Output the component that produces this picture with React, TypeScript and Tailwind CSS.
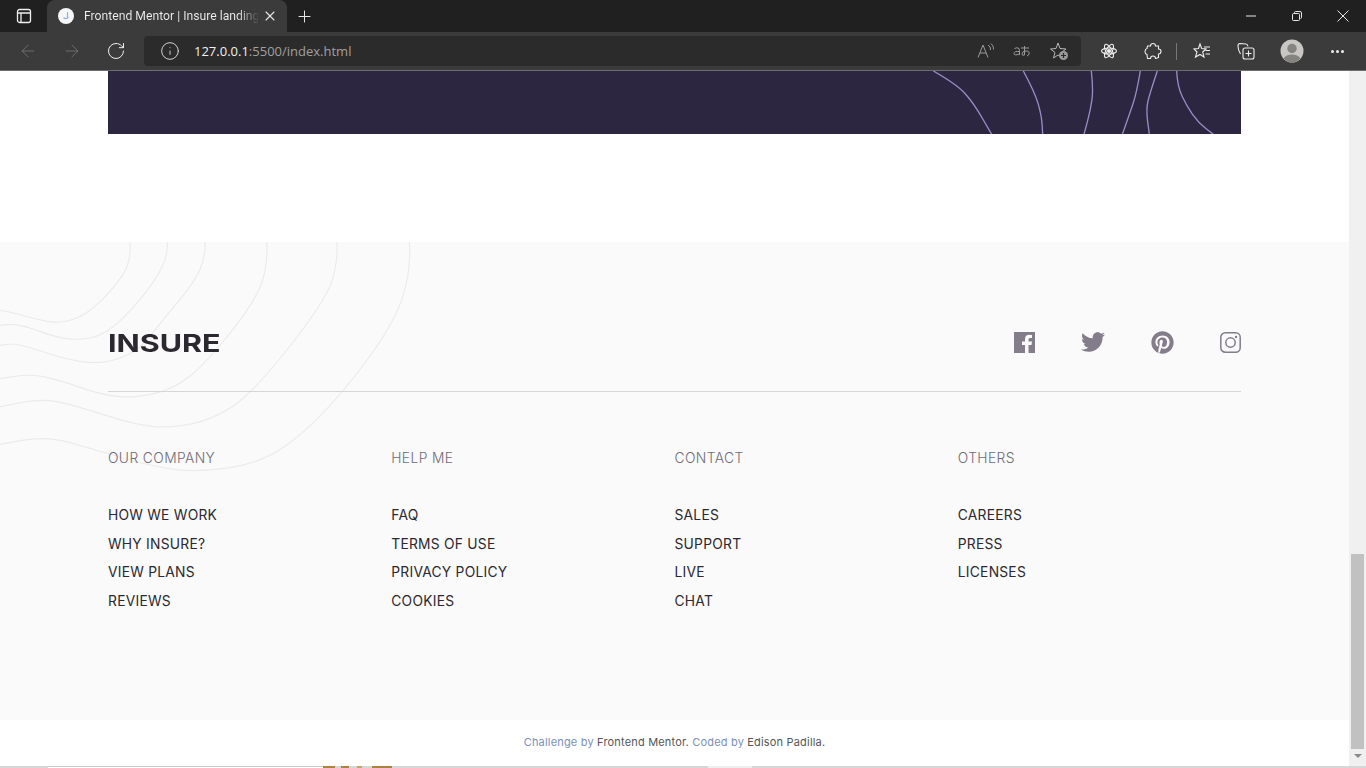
import { ArrowLeft, ArrowRight, Info, Plus, RotateCw, X } from "lucide-react";
import { FaPinterest, FaTwitter } from "react-icons/fa";

// smooth line through points, used for the contour decoration
function smooth(pts: number[][]) {
  let d = `M${pts[0][0]} ${pts[0][1]}`;
  for (let i = 1; i < pts.length - 1; i++) {
    const mx = (pts[i][0] + pts[i + 1][0]) / 2;
    const my = (pts[i][1] + pts[i + 1][1]) / 2;
    d += ` Q${pts[i][0]} ${pts[i][1]} ${mx} ${my}`;
  }
  const last = pts[pts.length - 1];
  return d + ` L${last[0]} ${last[1]}`;
}

const footerCurves = [
  [[390, 18], [393, 60], [370, 120], [300, 200], [240, 245], [175, 262], [110, 250], [40, 230], [0, 223]],
  [[502, 18], [505, 50], [470, 130], [370, 250], [300, 300], [240, 312], [170, 305], [90, 275], [40, 264], [0, 268]],
  [[615, 18], [618, 50], [590, 130], [490, 250], [420, 340], [340, 375], [280, 382], [200, 370], [90, 335], [40, 322], [0, 328]],
  [[800, 18], [804, 80], [770, 190], [620, 380], [520, 460], [400, 487], [300, 475], [170, 430], [90, 414], [0, 428]],
  [[1010, 18], [1015, 70], [980, 190], [760, 470], [640, 550], [510, 577], [400, 565], [230, 510], [130, 487], [0, 512]],
  [[1228, 18], [1234, 90], [1190, 250], [1030, 470], [880, 620], [760, 685], [600, 708], [470, 695], [280, 640], [140, 600], [0, 625]],
];

const bandCurves = [
  [[100, 15], [170, 55], [220, 110], [275, 205]],
  [[370, 15], [405, 80], [425, 150], [428, 205]],
  [[574, 15], [580, 70], [572, 130], [552, 205]],
  [[721, 15], [710, 80], [690, 140], [667, 205]],
  [[772, 15], [750, 80], [738, 130], [748, 205]],
  [[830, 15], [832, 60], [860, 120], [895, 170], [940, 205]],
];

const columns = [
  { title: "OUR COMPANY", links: ["HOW WE WORK", "WHY INSURE?", "VIEW PLANS", "REVIEWS"] },
  { title: "HELP ME", links: ["FAQ", "TERMS OF USE", "PRIVACY POLICY", "COOKIES"] },
  { title: "CONTACT", links: ["SALES", "SUPPORT", "LIVE", "CHAT"] },
  { title: "OTHERS", links: ["CAREERS", "PRESS", "LICENSES"] },
];

function BrowserChrome() {
  return (
    <div className="shrink-0 font-['Open_Sans',sans-serif] text-[#e8e8e8]">
      <div className="flex h-8 items-end bg-[#202020]">
        <div className="flex h-8 w-[47px] items-center justify-center">
          <svg width="16" height="16" viewBox="0 0 16 16" fill="none" stroke="#f0f0f0" strokeWidth="1.3">
            <rect x="1.5" y="1.5" width="13" height="13" rx="2" />
            <path d="M1.5 5H14.5M5 5V14.5" />
          </svg>
        </div>
        <div className="flex h-8 w-[240px] items-center rounded-t-lg bg-[#3b3b3b] pl-[11px]">
          <svg width="16" height="16" viewBox="0 0 16 16">
            <circle cx="8" cy="8" r="8" fill="#f4f6f8" />
            <path d="M9.5 4V9M5.5 9.5Q8 12 10.5 9" fill="none" stroke="#8fb4d6" strokeWidth="1.2" />
          </svg>
          <span className="ml-[10px] w-[174px] whitespace-nowrap bg-linear-to-r from-[#f0f0f0] from-[88%] to-[#4a4a4a] bg-clip-text font-['Roboto',sans-serif] text-[12.2px] text-transparent">
            Frontend Mentor | Insure landing
          </span>
          <X size={16} strokeWidth={1.6} className="ml-[4px] text-[#e8e8e8]" />
        </div>
        <div className="flex h-8 w-[34px] items-center justify-center">
          <Plus size={19} strokeWidth={1.2} className="text-[#f0f0f0]" />
        </div>
        <div className="ml-auto flex h-8 items-center">
          <svg className="mr-[36px]" width="10" height="10" viewBox="0 0 10 10" stroke="#e8e8e8">
            <path d="M0 5H10" />
          </svg>
          <svg className="mr-[35px]" width="10" height="10" viewBox="0 0 10 10" fill="none" stroke="#e8e8e8">
            <rect x="0.5" y="2.5" width="7" height="7" rx="1" />
            <path d="M2.5 2V1.5Q2.5 .5 3.5 .5H8Q9.5 .5 9.5 2V6.5Q9.5 7.5 8.5 7.5" />
          </svg>
          <svg className="mr-[17px]" width="12" height="12" viewBox="0 0 12 12" stroke="#e8e8e8">
            <path d="M0.500 0.500L11.500 11.500M11.500 0.500L0.500 11.500" />
          </svg>
        </div>
      </div>
      <div className="flex h-[39px] items-center border-b border-[#6e6e6e] bg-[#3b3b3b]">
        <div className="flex w-[144px] items-center">
          <ArrowLeft size={20} strokeWidth={1} className="ml-[18px] text-[#777777]" />
          <ArrowRight size={20} strokeWidth={1} className="ml-[24px] text-[#777777]" />
          <RotateCw size={20} strokeWidth={1.2} className="ml-[24px] text-[#eeeeee]" />
        </div>
        <div className="flex h-[30px] w-[937px] items-center rounded bg-[#2b2b2b] pl-[16px]">
          <Info size={20} strokeWidth={1.1} className="text-[#e0e0e0]" />
          <span className="ml-[14px] mt-px text-[13px] text-[#f0f0f0]">
            127.0.0.1<span className="text-[#a0a0a0]">:5500/index.html</span>
          </span>
          <div className="ml-auto flex items-center gap-[18px] pr-[12px] text-[#9a9a9a]">
            <svg width="18" height="18" viewBox="0 0 18 18" fill="none" stroke="currentColor">
              <path d="M1 15.5L6 3L11 15.5M3 11H9M11 3Q14 4.500 13.500 8M14 1.500Q17 4 16.500 7.500" />
            </svg>
            <svg width="18" height="18" viewBox="0 0 18 18" fill="none" stroke="currentColor">
              <path d="M1.500 6.500Q4 5 6 6.500Q6.500 7 6.500 13M6.500 9.500Q1 9 1 11.500Q1 14 6.500 12M8 6H16M11.500 4V13Q9 14 9 12Q9 9 13 9Q17 9 16 12Q15.500 13.500 14 14" />
            </svg>
            <svg width="20" height="20" viewBox="0 0 20 20" fill="none" stroke="#b8b8b8">
              <path d="M9 2L11 7.500L17 8L12.500 11.500L14 17L9 14L4.500 17L6 11.500L1.500 8L7 7.500Z" />
              <circle cx="14.500" cy="14.500" r="4.500" fill="#9a9a9a" stroke="none" />
              <path d="M14.500 12V17M12 14.500H17" stroke="#2b2b2b" strokeWidth="1.200" />
            </svg>
          </div>
        </div>
        <div className="ml-[19px] flex items-center text-[#eeeeee]">
          <svg width="18" height="18" viewBox="0 0 18 18" fill="none" stroke="currentColor" strokeWidth="1.100">
            <ellipse cx="9" cy="9" rx="7.500" ry="3" />
            <ellipse cx="9" cy="9" rx="7.500" ry="3" transform="rotate(60 9 9)" />
            <ellipse cx="9" cy="9" rx="7.500" ry="3" transform="rotate(120 9 9)" />
            <circle cx="9" cy="9" r="1.500" fill="currentColor" />
          </svg>
          <svg className="ml-[26px]" width="18" height="18" viewBox="0 0 18 18" fill="none" stroke="currentColor" strokeWidth="1.100">
            <path d="M6.500 4Q6.500 1.500 9 1.500Q11.500 1.500 11.500 4H14.500V7Q17 7 17 9.500Q17 12 14.500 12V15.500Q12 16.500 11.500 16.500Q11.500 14 9 14Q6.500 14 6.500 16.500H3.500L3 12.500Q1 12 1 9.500Q1 7 3 6.500L3.500 4Z" />
          </svg>
          <div className="ml-[14px] h-[17px] w-px bg-[#777777]" />
          <svg className="ml-[16px]" width="18" height="18" viewBox="0 0 18 18" fill="none" stroke="currentColor" strokeWidth="1.100">
            <path d="M7 2L8.700 6.500L13 7L9.700 10L11 15L7 12.500L2.500 15L4 10L1 7L5.500 6.500ZM11 5H17M12.500 8.500H17M12.500 12H17" />
          </svg>
          <svg className="ml-[26px]" width="18" height="18" viewBox="0 0 18 18" fill="none" stroke="currentColor" strokeWidth="1.100">
            <path d="M3.500 12Q1 8 1 4Q1 1.500 3 1.500L9 2Q10.500 2 11 4.500" />
            <rect x="6" y="6" width="11" height="11" rx="2" />
            <path d="M11.500 8.500V14.500M8.500 11.500H14.500" />
          </svg>
          <svg className="ml-[25px]" width="24" height="24" viewBox="0 0 24 24">
            <circle cx="12" cy="12" r="11.500" fill="#c9c7c3" />
            <circle cx="12" cy="9.500" r="4.700" fill="#868480" />
            <path d="M3.500 19.500Q6 15.500 12 15.500Q18 15.500 20.500 19.500Q17 23.500 12 23.500Q7 23.500 3.500 19.500Z" fill="#868480" />
          </svg>
          <div className="ml-[27px] flex gap-[2px]">
            <span className="h-[3px] w-[3px] rounded-full bg-[#eeeeee]" />
            <span className="h-[3px] w-[3px] rounded-full bg-[#eeeeee]" />
            <span className="h-[3px] w-[3px] rounded-full bg-[#eeeeee]" />
          </div>
        </div>
      </div>
    </div>
  );
}

function SocialIcons() {
  return (
    <div className="flex items-center text-[#827c8b]">
      <svg width="21" height="21" viewBox="0 0 21 21" fill="currentColor">
        <path d="M0 0H21V21H14.500V13H17.500L18 9.500H14.500V7.500Q14.500 6 16 6H18V3Q17 2.800 15.500 2.800Q11 2.800 11 7V9.500H8V13H11V21H0Z" />
      </svg>
      <FaTwitter size={24} className="ml-[46px]" />
      <FaPinterest size={23} className="ml-[46px]" />
      <svg className="ml-[46px]" width="21" height="21" viewBox="0 0 21 21" fill="none" stroke="currentColor" strokeWidth="1.500">
        <rect x="0.800" y="0.800" width="19.400" height="19.400" rx="4.500" />
        <circle cx="10.500" cy="10.500" r="4.700" />
        <circle cx="16" cy="5" r="1.200" fill="currentColor" stroke="none" />
      </svg>
    </div>
  );
}

function Footer() {
  return (
    <footer className="relative h-[478px] bg-[#fafafa] px-[108px]">
      <svg className="absolute left-0 top-0" width="430" height="234" viewBox="0 18 1290 702" fill="none" stroke="#ebebeb" strokeWidth="3.500">
        {footerCurves.map((c, i) => (
          <path key={i} d={smooth(c)} />
        ))}
      </svg>
      <div className="relative">
        <div className="flex h-[150px] items-center justify-between border-b border-[#d6d6d6] pb-[25px] pt-[76px]">
          <span className="mt-[3px] origin-left scale-x-[1.27] font-['Inter',sans-serif] text-[24px] font-bold leading-none text-[#2c2830]">
            INSURE
          </span>
          <SocialIcons />
        </div>
        <div className="grid grid-cols-4 pt-[52px] font-['Inter',sans-serif] text-[13.8px] leading-[28.67px] tracking-[0.25px]">
          {columns.map((col) => (
            <div key={col.title}>
              <h3 className="mb-[28.33px] font-light tracking-[0.4px] text-[#6f6a78]">{col.title}</h3>
              {col.links.map((l) => (
                <div key={l} className="text-[#2c2830]">
                  {l}
                </div>
              ))}
            </div>
          ))}
        </div>
      </div>
    </footer>
  );
}

export default function App() {
  return (
    <div className="flex h-screen flex-col overflow-hidden bg-white">
      <BrowserChrome />
      <div className="flex h-[695px] shrink-0">
        <main className="w-[1349px] shrink-0">
          <div className="mx-[108px] flex h-[63px] justify-end bg-[#2d2640]">
            <svg width="341" height="63" viewBox="0 15 1023 189" fill="none" stroke="#958ec4" strokeWidth="4">
              {bandCurves.map((c, i) => (
                <path key={i} d={smooth(c)} />
              ))}
            </svg>
          </div>
          <div className="h-[108px]" />
          <Footer />
          <p className="pt-[14px] text-center font-['Inter',sans-serif] text-[11px] tracking-[0.18px] text-[#555555]">
            <span className="text-[#7b8fb8]">Challenge by</span> Frontend Mentor.{" "}
            <span className="text-[#7b8fb8]">Coded by</span> Edison Padilla.
          </p>
        </main>
        <div className="flex w-[17px] shrink-0 flex-col items-center bg-[#f0f0f0]">
          <div className="mt-[483px] h-[195px] w-[13px] bg-[#c1c1c1]" />
          <div className="mt-[5px] h-0 w-0 border-x-[4px] border-t-[4px] border-x-transparent border-t-[#8a8a8a]" />
        </div>
      </div>
      {/* sliver of whatever window sits under this one */}
      <div className="flex h-[2px] shrink-0 bg-[#d6d6d6]">
        <div className="ml-[48px] h-full w-[275px] border-t border-[#c8c8c8] bg-white" />
        <div className="h-full w-[12px] bg-[#b08040]" />
        <div className="ml-[6px] h-full w-[8px] bg-[#b08040]" />
        <div className="ml-[8px] h-full w-[5px] bg-[#c9a26a]" />
        <div className="ml-[10px] h-full w-[20px] bg-[#b08040]" />
        <div className="ml-[316px] h-full w-[44px] bg-[#efefef]" />
      </div>
    </div>
  );
}
